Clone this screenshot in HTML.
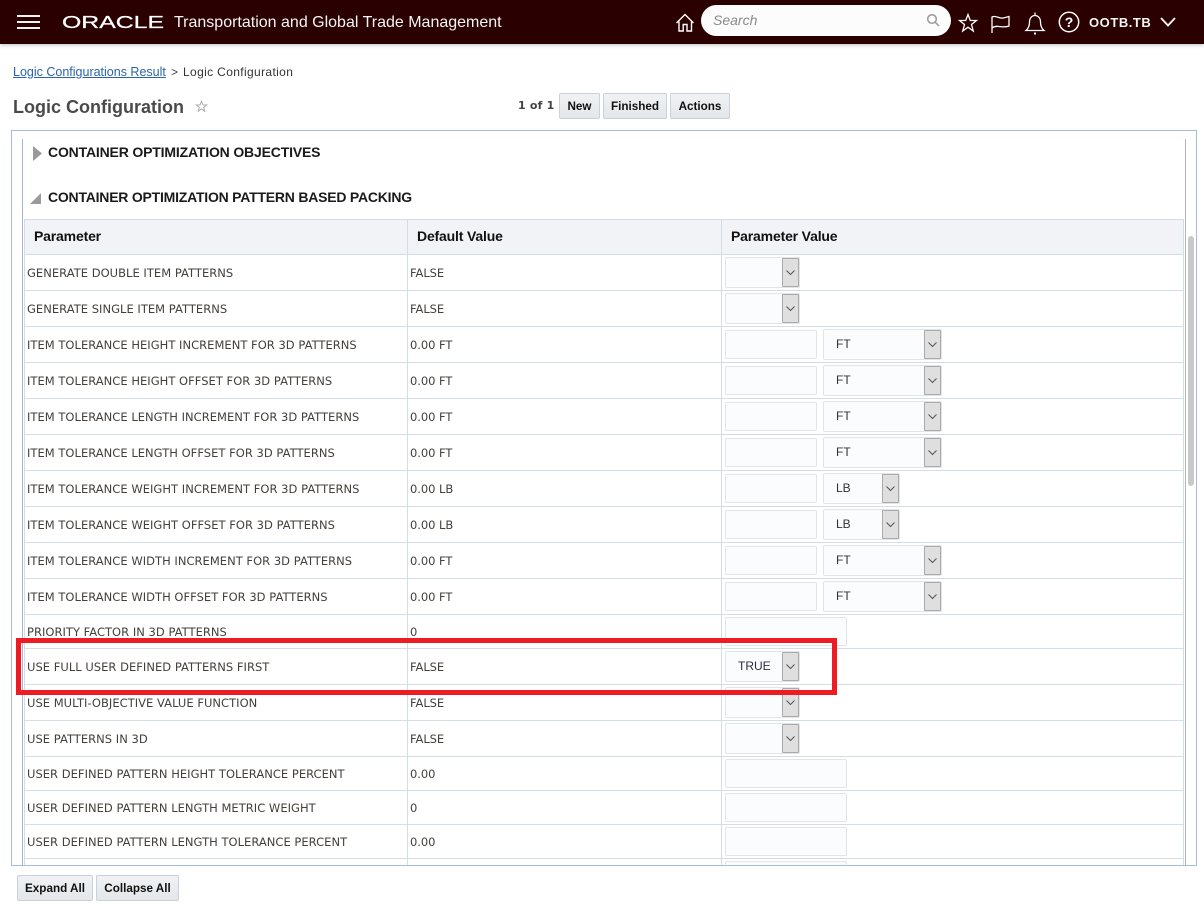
<!DOCTYPE html>
<html><head><meta charset="utf-8"><title>Logic Configuration</title>
<style>
html,body{margin:0;padding:0;background:#fff}
#p{position:relative;width:1204px;height:905px;overflow:hidden;background:#fff;font-family:"Liberation Sans",sans-serif;color:#333}
#p div,#p a,#p svg{position:absolute;box-sizing:border-box}
.hd{left:0;top:0;width:1204px;height:44px;background:#2a0000;box-shadow:0 1px 4px rgba(0,0,0,.25)}
.btn{height:26px;background:linear-gradient(#f0f2f4,#e3e7ea);border:1px solid #c9d2da;border-radius:2px;font:bold 11.7px/25px "Liberation Sans",sans-serif;color:#111;text-align:center}
.sec{left:48px;font:bold 14px/18px "Liberation Sans",sans-serif;color:#1a1a1a;letter-spacing:-.2px;white-space:nowrap}
.th{top:220px;height:34px;font:bold 14px/33px "Liberation Sans",sans-serif;color:#111;letter-spacing:-.17px;white-space:nowrap}
.h{left:24px;width:1160px;height:1px;background:#d3dde6}
.v{width:1px;top:219px;height:646px;background:#d3dde6}
.l{left:27px;font:11.5px/16px "DejaVu Sans",sans-serif;color:#44403c;white-space:nowrap;letter-spacing:.025px}
.d{left:410px;font:11.5px/16px "DejaVu Sans",sans-serif;color:#44403c;white-space:nowrap;letter-spacing:-.05px}
.i{background:#fbfcfe;border:1px solid #e2e5e8;border-radius:2px}
.s{background:#fbfcfe;border:1px solid #e2e5e8;border-radius:2px;font:12px/28px "Liberation Sans",sans-serif;color:#333}
.a{right:0;top:0;width:17px;height:100%;background:#dfdfdf;border:1px solid #aaa;border-radius:1px}
.a svg{left:3px;top:11px}
</style></head><body><div id="p">

<div class="hd"></div>
<div style="left:17px;top:15px;width:23px;height:2px;background:#f2f2f2"></div>
<div style="left:17px;top:21px;width:23px;height:2px;background:#f2f2f2"></div>
<div style="left:17px;top:27px;width:23px;height:2px;background:#f2f2f2"></div>
<svg style="left:62px;top:14px" width="104" height="16" viewBox="0 0 104 16"><text x="0" y="14.200" textLength="102" lengthAdjust="spacingAndGlyphs" font-family="Liberation Sans" font-size="17.500" fill="#fff" stroke="#fff" stroke-width=".25">ORACLE</text></svg>
<div style="left:174px;top:13px;font:16px/20px 'Liberation Sans',sans-serif;color:#f4f4f4;white-space:nowrap">Transportation and Global Trade Management</div>

<svg style="left:675px;top:12px" width="21" height="21" viewBox="0 0 21 21" fill="none" stroke="#fff" stroke-width="1.4"><path d="M1.500 11 10 2.500 18.500 11"/><path d="M4 9.500V19H8.200V12.500H12V19H16.500V9.500"/></svg>
<div style="left:701px;top:5px;width:250px;height:31px;background:#fcfcfc;border-radius:16px"></div>
<div style="left:713px;top:12px;font:italic 14px/16px 'Liberation Sans',sans-serif;color:#8a8a8a">Search</div>
<svg style="left:926px;top:13px" width="14" height="14" viewBox="0 0 14 14" fill="none" stroke="#9a9a9a" stroke-width="1.5"><circle cx="6" cy="6" r="4.300"/><path d="M9 9 13 13"/></svg>
<svg style="left:958px;top:13px" width="20" height="20" viewBox="0 0 20 20" fill="none" stroke="#fff" stroke-width="1.3"><path d="M10 1.500 12.300 7.500H18.500L13.500 11.500 15.300 18 10 14.200 4.700 18 6.500 11.500 1.500 7.500H7.700Z"/></svg>
<svg style="left:990px;top:14px" width="22" height="20" viewBox="0 0 22 20" fill="none" stroke="#fff" stroke-width="1.3"><path d="M2 19V3C6 1 9 5 13 4 15.500 3.500 17 3 19 2.500V12C15 13.500 12 13 9 12.500 6.500 12 4 12.500 2 14"/></svg>
<svg style="left:1024px;top:11px" width="22" height="25" viewBox="0 0 22 25" fill="none" stroke="#fff" stroke-width="1.3"><path d="M2 19.500C5 17 5.500 14 5.500 11 5.500 7 8 4.500 11 4.500 14 4.500 16.500 7 16.500 11 16.500 14 17 17 20 19.500Z"/><path d="M11 1.500V4.500"/><circle cx="11" cy="22.500" r="1.100" fill="#fff" stroke="none"/></svg>
<svg style="left:1058px;top:11px" width="22" height="22" viewBox="0 0 22 22" fill="none" stroke="#fff" stroke-width="1.5"><circle cx="11" cy="11" r="9.700"/><text x="11" y="16" text-anchor="middle" font-family="Liberation Sans" font-weight="bold" font-size="14" fill="#fff" stroke="none">?</text></svg>
<div style="left:1089px;top:15px;font:bold 13px/16px 'Liberation Sans',sans-serif;color:#f5f5f5;letter-spacing:.55px;white-space:nowrap">OOTB.TB</div>
<svg style="left:1159px;top:16px" width="18" height="12" viewBox="0 0 18 12" fill="none" stroke="#f5f5f5" stroke-width="1.900"><path d="M2 2 9 9.500 16 2"/></svg>

<div style="left:13px;top:65px;font:12.5px/15px 'Liberation Sans',sans-serif;white-space:nowrap;color:#2a64a8;text-decoration:underline">Logic Configurations Result</div>
<div style="left:171px;top:65px;font:12px/15px 'Liberation Sans',sans-serif;color:#444">&gt;</div>
<div style="left:183px;top:65px;font:12px/15px 'Liberation Sans',sans-serif;color:#333;letter-spacing:.36px;white-space:nowrap">Logic Configuration</div>
<div style="left:13px;top:96px;font:bold 18px/22px 'Liberation Sans',sans-serif;color:#4a4a4a;white-space:nowrap">Logic Configuration</div>
<svg style="left:195px;top:100px" width="13" height="13" viewBox="0 0 15 15" fill="none" stroke="#aaa" stroke-width="1.1"><path d="M7.500 1.500 9.200 5.700H13.700L10 8.500 11.300 13 7.500 10.300 3.700 13 5 8.500 1.300 5.700H5.800Z"/></svg>
<div style="left:518px;top:98px;font:bold 11px/16px 'DejaVu Sans','Liberation Sans',sans-serif;color:#444;letter-spacing:.2px;white-space:nowrap">1 of 1</div>
<div class="btn" style="left:559px;top:93px;width:41px">New</div>
<div class="btn" style="left:603px;top:93px;width:64px">Finished</div>
<div class="btn" style="left:670px;top:93px;width:60px">Actions</div>

<div style="left:11px;top:130px;width:1186px;height:736px;border:1px solid #a6bdd6"></div>
<div style="left:22px;top:139px;width:1px;height:726px;background:#a9b4d2"></div>
<div style="left:1185px;top:139px;width:1px;height:726px;background:#a9b4d2"></div>
<div style="left:1188px;top:236px;width:6px;height:250px;background:#c9c9c9;border-radius:3px"></div>

<svg style="left:33px;top:146px" width="10" height="15" viewBox="0 0 10 15"><path d="M0 0 9 7.500 0 15Z" fill="#9a9a9a"/></svg>
<div class="sec" style="top:143px;letter-spacing:-.17px">CONTAINER OPTIMIZATION OBJECTIVES</div>
<svg style="left:30px;top:193px" width="12" height="12" viewBox="0 0 12 12"><path d="M11 0V11H0Z" fill="#9a9a9a"/></svg>
<div class="sec" style="top:188px;letter-spacing:-.22px">CONTAINER OPTIMIZATION PATTERN BASED PACKING</div>

<div style="left:24px;top:219px;width:1160px;height:36px;background:#f1f3f7"></div>
<div class="th" style="left:34px">Parameter</div>
<div class="th" style="left:417px">Default Value</div>
<div class="th" style="left:731px">Parameter Value</div>

<div class="h" style="top:219px"></div><div class="h" style="top:254px"></div><div class="h" style="top:290px"></div><div class="h" style="top:326px"></div><div class="h" style="top:362px"></div><div class="h" style="top:398px"></div><div class="h" style="top:434px"></div><div class="h" style="top:470px"></div><div class="h" style="top:506px"></div><div class="h" style="top:542px"></div><div class="h" style="top:578px"></div><div class="h" style="top:614px"></div><div class="h" style="top:648px"></div><div class="h" style="top:684px"></div><div class="h" style="top:720px"></div><div class="h" style="top:756px"></div><div class="h" style="top:790px"></div><div class="h" style="top:824px"></div><div class="h" style="top:858px"></div>
<div class="v" style="left:24px"></div><div class="v" style="left:407px"></div><div class="v" style="left:721px"></div><div class="v" style="left:1183px"></div>

<div class="l" style="top:265px">GENERATE DOUBLE ITEM PATTERNS</div><div class="d" style="top:265px">FALSE</div>
<div class="l" style="top:301px">GENERATE SINGLE ITEM PATTERNS</div><div class="d" style="top:301px">FALSE</div>
<div class="l" style="top:337px">ITEM TOLERANCE HEIGHT INCREMENT FOR 3D PATTERNS</div><div class="d" style="top:337px">0.00 FT</div>
<div class="l" style="top:373px">ITEM TOLERANCE HEIGHT OFFSET FOR 3D PATTERNS</div><div class="d" style="top:373px">0.00 FT</div>
<div class="l" style="top:409px">ITEM TOLERANCE LENGTH INCREMENT FOR 3D PATTERNS</div><div class="d" style="top:409px">0.00 FT</div>
<div class="l" style="top:445px">ITEM TOLERANCE LENGTH OFFSET FOR 3D PATTERNS</div><div class="d" style="top:445px">0.00 FT</div>
<div class="l" style="top:481px">ITEM TOLERANCE WEIGHT INCREMENT FOR 3D PATTERNS</div><div class="d" style="top:481px">0.00 LB</div>
<div class="l" style="top:517px">ITEM TOLERANCE WEIGHT OFFSET FOR 3D PATTERNS</div><div class="d" style="top:517px">0.00 LB</div>
<div class="l" style="top:553px">ITEM TOLERANCE WIDTH INCREMENT FOR 3D PATTERNS</div><div class="d" style="top:553px">0.00 FT</div>
<div class="l" style="top:589px">ITEM TOLERANCE WIDTH OFFSET FOR 3D PATTERNS</div><div class="d" style="top:589px">0.00 FT</div>
<div class="l" style="top:624px">PRIORITY FACTOR IN 3D PATTERNS</div><div class="d" style="top:624px">0</div>
<div class="l" style="top:659px">USE FULL USER DEFINED PATTERNS FIRST</div><div class="d" style="top:659px">FALSE</div>
<div class="l" style="top:695px">USE MULTI-OBJECTIVE VALUE FUNCTION</div><div class="d" style="top:695px">FALSE</div>
<div class="l" style="top:731px">USE PATTERNS IN 3D</div><div class="d" style="top:731px">FALSE</div>
<div class="l" style="top:766px">USER DEFINED PATTERN HEIGHT TOLERANCE PERCENT</div><div class="d" style="top:766px">0.00</div>
<div class="l" style="top:800px">USER DEFINED PATTERN LENGTH METRIC WEIGHT</div><div class="d" style="top:800px">0</div>
<div class="l" style="top:834px">USER DEFINED PATTERN LENGTH TOLERANCE PERCENT</div><div class="d" style="top:834px">0.00</div>

<div class="s" style="left:725px;top:257px;width:75px;height:31px"><div class="a"><svg width="9" height="6" viewBox="0 0 9 6" fill="none" stroke="#555"><path d="M.5.500 4.500 4.500 8.500.5"/></svg></div></div>
<div class="s" style="left:725px;top:293px;width:75px;height:31px"><div class="a"><svg width="9" height="6" viewBox="0 0 9 6" fill="none" stroke="#555"><path d="M.5.500 4.500 4.500 8.500.5"/></svg></div></div>

<div class="i" style="left:725px;top:330px;width:92px;height:29px"></div>
<div class="s" style="left:823px;top:329px;width:119px;height:31px;padding-left:12px">FT<div class="a"><svg width="9" height="6" viewBox="0 0 9 6" fill="none" stroke="#555"><path d="M.5.500 4.500 4.500 8.500.5"/></svg></div></div>
<div class="i" style="left:725px;top:366px;width:92px;height:29px"></div>
<div class="s" style="left:823px;top:365px;width:119px;height:31px;padding-left:12px">FT<div class="a"><svg width="9" height="6" viewBox="0 0 9 6" fill="none" stroke="#555"><path d="M.5.500 4.500 4.500 8.500.5"/></svg></div></div>
<div class="i" style="left:725px;top:402px;width:92px;height:29px"></div>
<div class="s" style="left:823px;top:401px;width:119px;height:31px;padding-left:12px">FT<div class="a"><svg width="9" height="6" viewBox="0 0 9 6" fill="none" stroke="#555"><path d="M.5.500 4.500 4.500 8.500.5"/></svg></div></div>
<div class="i" style="left:725px;top:438px;width:92px;height:29px"></div>
<div class="s" style="left:823px;top:437px;width:119px;height:31px;padding-left:12px">FT<div class="a"><svg width="9" height="6" viewBox="0 0 9 6" fill="none" stroke="#555"><path d="M.5.500 4.500 4.500 8.500.5"/></svg></div></div>
<div class="i" style="left:725px;top:474px;width:92px;height:29px"></div>
<div class="s" style="left:823px;top:473px;width:77px;height:31px;padding-left:12px">LB<div class="a"><svg width="9" height="6" viewBox="0 0 9 6" fill="none" stroke="#555"><path d="M.5.500 4.500 4.500 8.500.5"/></svg></div></div>
<div class="i" style="left:725px;top:510px;width:92px;height:29px"></div>
<div class="s" style="left:823px;top:509px;width:77px;height:31px;padding-left:12px">LB<div class="a"><svg width="9" height="6" viewBox="0 0 9 6" fill="none" stroke="#555"><path d="M.5.500 4.500 4.500 8.500.5"/></svg></div></div>
<div class="i" style="left:725px;top:546px;width:92px;height:29px"></div>
<div class="s" style="left:823px;top:545px;width:119px;height:31px;padding-left:12px">FT<div class="a"><svg width="9" height="6" viewBox="0 0 9 6" fill="none" stroke="#555"><path d="M.5.500 4.500 4.500 8.500.5"/></svg></div></div>
<div class="i" style="left:725px;top:582px;width:92px;height:29px"></div>
<div class="s" style="left:823px;top:581px;width:119px;height:31px;padding-left:12px">FT<div class="a"><svg width="9" height="6" viewBox="0 0 9 6" fill="none" stroke="#555"><path d="M.5.500 4.500 4.500 8.500.5"/></svg></div></div>

<div class="i" style="left:725px;top:617px;width:122px;height:29px"></div>
<div class="s" style="left:725px;top:651px;width:75px;height:31px;padding-left:12px;color:#2a2f45">TRUE<div class="a"><svg width="9" height="6" viewBox="0 0 9 6" fill="none" stroke="#555"><path d="M.5.500 4.500 4.500 8.500.5"/></svg></div></div>
<div class="s" style="left:725px;top:687px;width:75px;height:31px"><div class="a"><svg width="9" height="6" viewBox="0 0 9 6" fill="none" stroke="#555"><path d="M.5.500 4.500 4.500 8.500.5"/></svg></div></div>
<div class="s" style="left:725px;top:723px;width:75px;height:31px"><div class="a"><svg width="9" height="6" viewBox="0 0 9 6" fill="none" stroke="#555"><path d="M.5.500 4.500 4.500 8.500.5"/></svg></div></div>
<div class="i" style="left:725px;top:759px;width:122px;height:29px"></div>
<div class="i" style="left:725px;top:793px;width:122px;height:29px"></div>
<div class="i" style="left:725px;top:827px;width:122px;height:29px"></div>
<div class="i" style="left:725px;top:861px;width:122px;height:4px;border-bottom:0"></div>

<div style="left:11px;top:865px;width:1186px;height:1px;background:#a6bdd6"></div>

<div style="left:16px;top:638px;width:821px;height:57px;border:5px solid #ed1c24"></div>

<div class="btn" style="left:17px;top:875px;width:76px">Expand All</div>
<div class="btn" style="left:96px;top:875px;width:83px">Collapse All</div>

</div></body></html>
